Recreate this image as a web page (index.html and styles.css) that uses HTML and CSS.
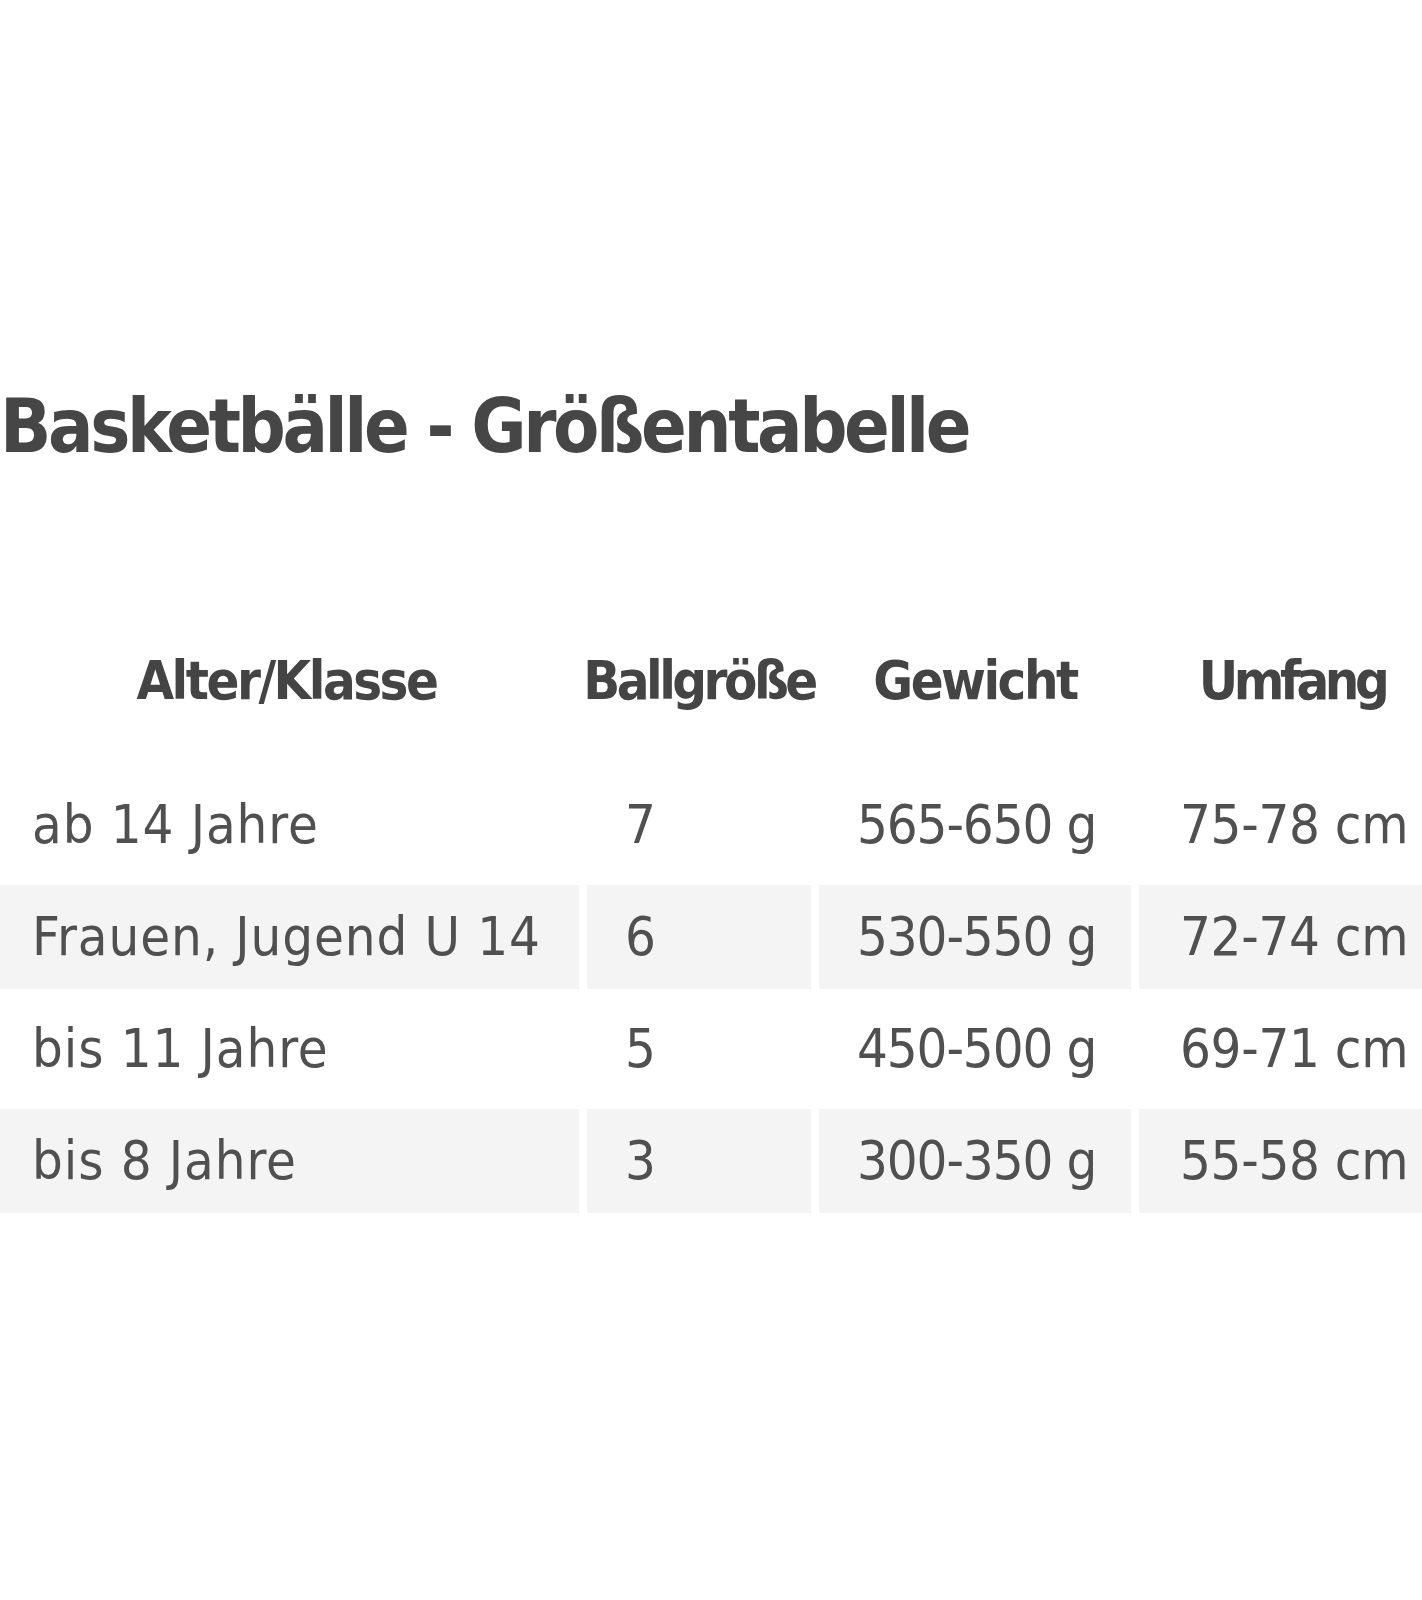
FILE: index.html
```html
<!DOCTYPE html>
<html lang="de">
<head>
<meta charset="utf-8">
<title>Basketbälle - Größentabelle</title>
<link rel="stylesheet" href="styles.css">
</head>
<body>
<div class="page">
  <h1 class="title">Basketbälle - Größentabelle</h1>
  <table class="sizes">
    <colgroup>
      <col class="c-age">
      <col class="c-size">
      <col class="c-weight">
      <col class="c-circ">
    </colgroup>
    <thead>
      <tr>
        <th><span class="head">Alter/Klasse</span></th>
        <th><span class="head head-tight">Ballgröße</span></th>
        <th><span class="head">Gewicht</span></th>
        <th><span class="head head-tighter">Umfang</span></th>
      </tr>
    </thead>
    <tbody>
      <tr>
        <td>ab 14 Jahre</td>
        <td>7</td>
        <td>565-650 g</td>
        <td>75-78 cm</td>
      </tr>
      <tr class="alt">
        <td>Frauen, Jugend U 14</td>
        <td>6</td>
        <td>530-550 g</td>
        <td>72-74 cm</td>
      </tr>
      <tr>
        <td>bis 11 Jahre</td>
        <td>5</td>
        <td>450-500 g</td>
        <td>69-71 cm</td>
      </tr>
      <tr class="alt">
        <td>bis 8 Jahre</td>
        <td>3</td>
        <td>300-350 g</td>
        <td>55-58 cm</td>
      </tr>
    </tbody>
  </table>
</div>
</body>
</html>
```

FILE: styles.css
```css
html, body {
  margin: 0;
  padding: 0;
  background: #ffffff;
}

body {
  font-family: "DejaVu Sans Condensed", "DejaVu Sans", sans-serif;
  color: #4d4d4d;
}

.page {
  width: 1422px;
  height: 1600px;
  overflow: hidden;
  padding-top: 389px;
  box-sizing: border-box;
}

.title {
  margin: 0 0 182px 0;
  font-size: 75px;
  line-height: 75px;
  font-weight: bold;
  letter-spacing: -3.4px;
  color: #464646;
  white-space: nowrap;
}

.sizes {
  table-layout: fixed;
  border-collapse: separate;
  border-spacing: 8px;
  width: 1467px;
  margin-left: -14px;
}

.c-age { width: 585px; }
.c-size { width: 224px; }
.c-weight { width: 312px; }
.c-circ { width: 306px; }

.sizes th {
  font-size: 54px;
  line-height: 54px;
  font-weight: bold;
  color: #444444;
  text-align: center;
  vertical-align: bottom;
  padding: 0 0 57px 0;
  white-space: nowrap;
}

.head {
  display: block;
  margin: 0 -40px;
  letter-spacing: -2.5px;
}

.head-tight {
  letter-spacing: -3.5px;
}

.head-tighter {
  letter-spacing: -4.5px;
}

.sizes td {
  height: 104px;
  box-sizing: border-box;
  font-size: 54px;
  line-height: 54px;
  padding: 0 0 0 38px;
  vertical-align: middle;
  text-align: left;
  white-space: nowrap;
  color: #505050;
}

.sizes td:first-child {
  letter-spacing: 0.9px;
}

.sizes td:nth-child(3) {
  letter-spacing: -1.1px;
}

.sizes td:nth-child(4) {
  padding-left: 41px;
  letter-spacing: -0.3px;
}

.sizes tr.alt td {
  background: #f4f4f4;
}
```
